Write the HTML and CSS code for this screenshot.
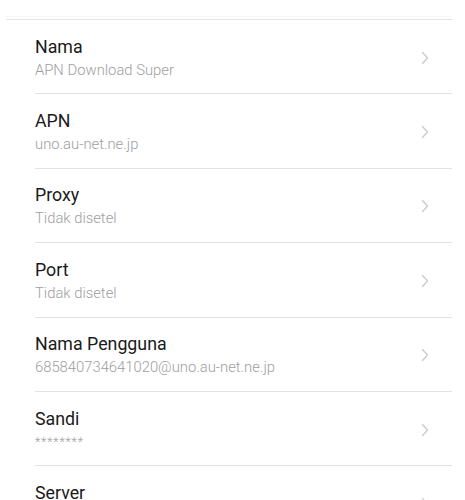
FILE: index.html
```html
<!DOCTYPE html>
<html lang="id">
<head>
<meta charset="utf-8">
<title>APN</title>
<link rel="stylesheet" href="styles.css">
</head>
<body>
<div class="screen">
  <div class="top-rule"></div>
  <ul class="list">
    <li class="row">
      <div class="text"><div class="title">Nama</div><div class="sub">APN Download Super</div></div>
      <svg class="chev" width="8" height="14" viewBox="0 0 8 14"><path d="M1.5 1.5 L6.5 7 L1.5 12.5" fill="none" stroke="#c9c9c9" stroke-width="1.2" stroke-linecap="round" stroke-linejoin="round"/></svg>
    </li>
    <li class="row">
      <div class="text"><div class="title">APN</div><div class="sub">uno.au-net.ne.jp</div></div>
      <svg class="chev" width="8" height="14" viewBox="0 0 8 14"><path d="M1.5 1.5 L6.5 7 L1.5 12.5" fill="none" stroke="#c9c9c9" stroke-width="1.2" stroke-linecap="round" stroke-linejoin="round"/></svg>
    </li>
    <li class="row">
      <div class="text"><div class="title">Proxy</div><div class="sub">Tidak disetel</div></div>
      <svg class="chev" width="8" height="14" viewBox="0 0 8 14"><path d="M1.5 1.5 L6.5 7 L1.5 12.5" fill="none" stroke="#c9c9c9" stroke-width="1.2" stroke-linecap="round" stroke-linejoin="round"/></svg>
    </li>
    <li class="row">
      <div class="text"><div class="title">Port</div><div class="sub">Tidak disetel</div></div>
      <svg class="chev" width="8" height="14" viewBox="0 0 8 14"><path d="M1.5 1.5 L6.5 7 L1.5 12.5" fill="none" stroke="#c9c9c9" stroke-width="1.2" stroke-linecap="round" stroke-linejoin="round"/></svg>
    </li>
    <li class="row">
      <div class="text"><div class="title">Nama Pengguna</div><div class="sub">685840734641020@uno.au-net.ne.jp</div></div>
      <svg class="chev" width="8" height="14" viewBox="0 0 8 14"><path d="M1.5 1.5 L6.5 7 L1.5 12.5" fill="none" stroke="#c9c9c9" stroke-width="1.2" stroke-linecap="round" stroke-linejoin="round"/></svg>
    </li>
    <li class="row">
      <div class="text"><div class="title">Sandi</div><div class="sub stars">********</div></div>
      <svg class="chev" width="8" height="14" viewBox="0 0 8 14"><path d="M1.5 1.5 L6.5 7 L1.5 12.5" fill="none" stroke="#c9c9c9" stroke-width="1.2" stroke-linecap="round" stroke-linejoin="round"/></svg>
    </li>
    <li class="row">
      <div class="text"><div class="title">Server</div><div class="sub">Tidak disetel</div></div>
      <svg class="chev" width="8" height="14" viewBox="0 0 8 14"><path d="M1.5 1.5 L6.5 7 L1.5 12.5" fill="none" stroke="#c9c9c9" stroke-width="1.2" stroke-linecap="round" stroke-linejoin="round"/></svg>
    </li>
  </ul>
</div>
</body>
</html>
```
FILE: styles.css
```css
html, body {
  margin: 0;
  padding: 0;
  background: #ffffff;
  overflow: hidden;
}
body {
  font-family: Roboto, "Noto Sans", Arial, sans-serif;
  height: 500px;
}
.screen {
  padding-top: 16px;
}
.top-rule {
  height: 2px;
  margin: 0 13px 0 6px;
  border-top: 1px solid #f6f6f6;
  border-bottom: 1px solid #e4e4e4;
}
.list {
  list-style: none;
  margin: 0;
  padding: 0 13px 0 35px;
}
.row {
  display: flex;
  align-items: center;
  justify-content: space-between;
  height: 74.4px;
  box-sizing: border-box;
  border-bottom: 1px solid #e2e2e2;
  padding-top: 2px;
}
.text {
  display: flex;
  flex-direction: column;
}
.title {
  font-size: 17.8px;
  font-weight: 400;
  line-height: 22px;
  color: #1a1a1a;
}
.sub {
  font-size: 14.8px;
  font-weight: 300;
  line-height: 20px;
  margin-top: 2px;
  color: #9e9e9e;
}
.stars {
  font-size: 12.5px;
  letter-spacing: 0.8px;
}
.chev {
  margin-right: 23px;
}
```
